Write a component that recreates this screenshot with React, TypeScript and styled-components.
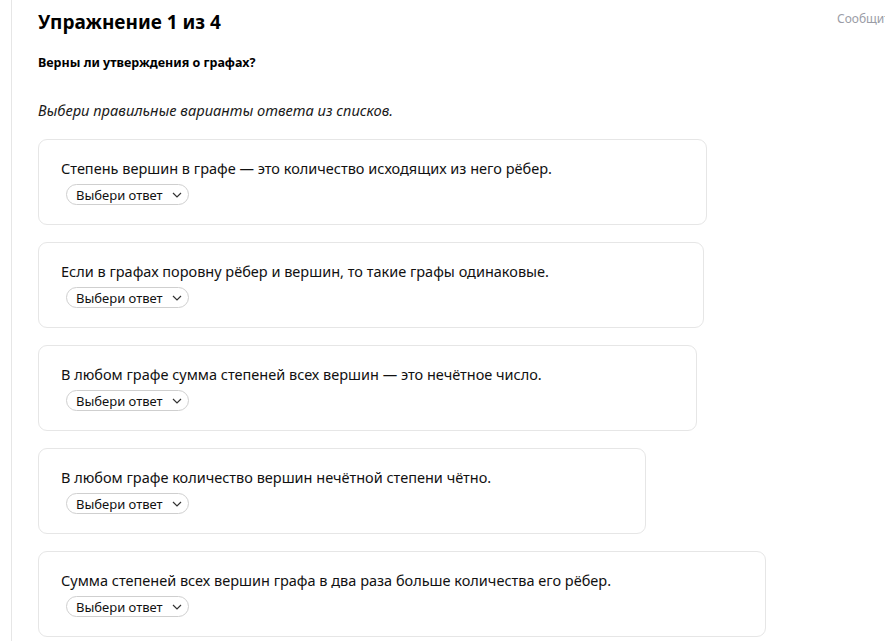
import React from 'react';
import styled, { createGlobalStyle } from 'styled-components';

const statements = [
  'Степень вершин в графе — это количество исходящих из него рёбер.',
  'Если в графах поровну рёбер и вершин, то такие графы одинаковые.',
  'В любом графе сумма степеней всех вершин — это нечётное число.',
  'В любом графе количество вершин нечётной степени чётно.',
  'Сумма степеней всех вершин графа в два раза больше количества его рёбер.',
];

const App: React.FC = () => {
  return (
    <>
      <GlobalStyle />
      <Page>
        <Main>
          <Title>Упражнение 1 из 4</Title>
          <Question>Верны ли утверждения о графах?</Question>
          <Hint>Выбери правильные варианты ответа из списков.</Hint>
          <CardList>
            {statements.map((s, i) => (
              <Card key={i}>
                <Statement>{s}</Statement>
                <Select>
                  Выбери ответ
                  <svg width="10" height="6" viewBox="0 0 10 6">
                    <path d="M1 1l4 4 4-4" fill="none" stroke="#333" strokeWidth="1.2" />
                  </svg>
                </Select>
              </Card>
            ))}
          </CardList>
        </Main>
        <Report>Сообщить об ошибке</Report>
      </Page>
    </>
  );
};

export default App;

// Стили

const GlobalStyle = createGlobalStyle`
  body {
    margin: 0;
    background: #fff;
    font-family: "Noto Sans", "Open Sans", sans-serif;
    color: #000;
    overflow: hidden;
  }
`;

const Page = styled.div`
  display: flex;
  height: 641px;
  margin-left: 11px;
  border-left: 1px solid #e6e6e6;
  overflow: hidden;
`;

const Main = styled.div`
  flex: 1;
  padding: 9px 0 0 26px;
`;

const Title = styled.h1`
  margin: 0;
  font-size: 19px;
  font-weight: 700;
  line-height: 26px;
`;

const Question = styled.div`
  margin-top: 19px;
  font-size: 12.5px;
  font-weight: 700;
  line-height: 18px;
`;

const Hint = styled.div`
  margin-top: 28px;
  font-size: 14.7px;
  font-style: italic;
  line-height: 20px;
  color: #1a1a1a;
`;

const CardList = styled.div`
  display: flex;
  flex-direction: column;
  align-items: flex-start;
  gap: 17px;
  margin-top: 19px;
`;

const Card = styled.div`
  border: 1px solid #e6e6e6;
  border-radius: 9px;
  padding: 18px 154px 19px 22px;
`;

const Statement = styled.div`
  font-size: 14.5px;
  line-height: 20px;
  color: #111;
`;

const Select = styled.div`
  display: inline-flex;
  align-items: center;
  gap: 9px;
  margin: 6px 0 0 5px;
  height: 21px;
  padding: 0 6px 0 9px;
  border: 1px solid #cfcfcf;
  border-radius: 11px;
  font-size: 13px;
  color: #111;
  box-sizing: border-box;
`;

const Report = styled.div`
  flex: none;
  padding: 10px 0 0 0;
  width: 48px;
  white-space: nowrap;
  font-size: 12px;
  color: #9a9ca6;
`;
